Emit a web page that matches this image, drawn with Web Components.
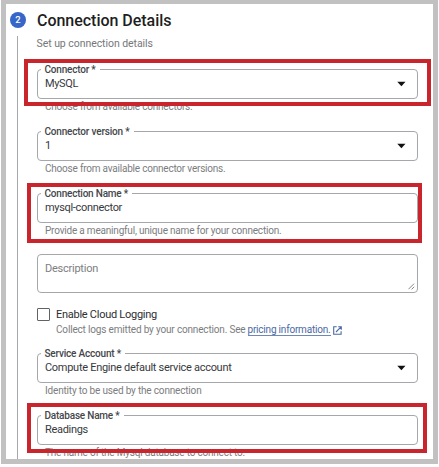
<!DOCTYPE html>
<html lang="en"><head><meta charset="utf-8"><title>Connection Details</title>
<style>
html,body{margin:0;background:#fff;width:439px;height:467px;overflow:hidden;font-family:Roboto,"Open Sans",sans-serif}
</style></head><body>
<connection-page></connection-page>
<script>
// Single line of text whose tracking is adjusted to span a given width.
class FitText extends HTMLElement{
  constructor(){super();this.attachShadow({mode:'open'}).innerHTML='<style>:host{display:inline-block;white-space:nowrap;vertical-align:top}span{display:inline-block}</style><span><slot></slot></span>';}
  connectedCallback(){
    const s=this.shadowRoot.querySelector('span'),w=+this.getAttribute('w');
    const n=this.textContent.length,r=s.getBoundingClientRect().width;
    if(w&&n)s.style.letterSpacing=((w-r)/n)+'px';
  }
}
// Red rectangle laid over a form field.
class RedMark extends HTMLElement{
  constructor(){super();this.attachShadow({mode:'open'}).innerHTML='<style>:host{position:absolute;z-index:3;box-sizing:border-box;border:4px solid #c9252d;pointer-events:none}</style>';}
}
class FormField extends HTMLElement{
  constructor(){super();this.attachShadow({mode:'open'}).innerHTML=`<style>
:host{display:block;flex:none;position:relative;box-sizing:border-box;width:381px;height:62px;font-size:11px;color:#37393d}
.box{box-sizing:border-box;height:30px;border:1.5px solid #a5a7aa;border-radius:4px;display:flex;align-items:center;justify-content:space-between;padding:0 10.5px 0 7.5px}
.label{position:absolute;left:4px;top:-6px;padding:0 4px;line-height:13px;background:#fff;font-size:10px;font-weight:500;color:#44464a}
.value{line-height:16px}
.help{line-height:14px;font-size:10px;color:#7b7d80;padding:1px 0 0 8.5px}
svg{display:none}:host([select]) svg{display:block}
</style><div class="box"><div class="value"><slot name="value"></slot></div><svg width="9" height="6" viewBox="0 0 9 6"><path d="M.3.8h8.2L4.4 5.2z" fill="#111"/></svg></div>
<div class="label"><slot name="label"></slot></div><div class="help"><slot name="help"></slot></div><slot></slot>`;}
}
class StepHeader extends HTMLElement{
  constructor(){super();this.attachShadow({mode:'open'}).innerHTML=`<style>
:host{display:flex;align-items:center;height:32px;padding-left:4px;gap:11px}
i{box-sizing:border-box;width:16px;height:16px;border-radius:50%;background:#3566c8;color:#fff;font:500 9.5px/16px Roboto,sans-serif;text-align:center}
h1{margin:1px 0 0;font-size:16px;font-weight:500;line-height:22px;color:#1e1f22}
</style><i>2</i><h1><slot></slot></h1>`;}
}
class DescriptionBox extends HTMLElement{
  constructor(){super();this.attachShadow({mode:'open'}).innerHTML=`<style>
:host{flex:none;box-sizing:border-box;width:381px;height:39px;border:1.5px solid #a5a7aa;border-radius:4px;display:flex;justify-content:space-between;align-items:flex-end;font-size:11px;color:#7c7e81;padding:0 2px 2px 7.5px}
div{align-self:flex-start;padding-top:6px;line-height:16px}
</style><div><slot></slot></div><svg width="7" height="7" viewBox="0 0 7 7"><path d="M.5 6.2 6 .7M3.6 6.4 6.2 3.8" stroke="#666" stroke-width=".8" fill="none"/></svg>`;}
}
class LoggingOption extends HTMLElement{
  constructor(){super();this.attachShadow({mode:'open'}).innerHTML=`<style>
:host{flex:none;display:flex;gap:6px;height:45px;font-size:11px;color:#2c2e31}
.check{box-sizing:border-box;width:13px;height:13px;margin:0 0 0 .5px;border:1.5px solid #606265;border-radius:1px}
.title{line-height:14px}
.line{font-size:10px;line-height:14px;color:#7b7d80;display:flex;margin-top:1px}
.link{color:#4b69a3;border-bottom:1px solid #6f87b6;height:12px;line-height:14px;margin-left:2px}
svg{margin:2.5px 0 0 2px}
</style><div class="check"></div><div><div class="title"><fit-text w="101">Enable Cloud Logging</fit-text></div>
<div class="line"><fit-text w="189.5">Collect logs emitted by your connection. See</fit-text><span class="link"><fit-text w="83">pricing information.</fit-text></span>
<svg width="9" height="9" viewBox="0 0 9 9"><path d="M3.7.8H.7v7.4h7.4V5.2M5.2.7h3.1v3.1M8.1.9 3 6" stroke="#4b69a3" stroke-width="1.1" fill="none"/></svg></div></div>`;}
}
class ConnectionPage extends HTMLElement{
  constructor(){super();this.attachShadow({mode:'open'}).innerHTML=`<style>
:host{display:block;box-sizing:border-box;width:437px;height:464px;margin-left:1px;border:solid #c1c1c1;border-width:4px 5px 5px;background:#fff;overflow:hidden}
.body{display:flex;margin-left:11px;height:423px}
.rail{box-sizing:border-box;width:1px;background:#a6a8ab;flex:none}
.form{display:flex;flex-direction:column;margin-left:18.5px;width:382px;flex:none}
.sub{flex:none;font-size:10.5px;color:#757779;line-height:14px;height:32px;padding-top:1px}
</style>
<step-header><fit-text w="134.5">Connection Details</fit-text></step-header>
<div class="body"><div class="rail"></div><div class="form">
<div class="sub"><fit-text w="116.5">Set up connection details</fit-text></div>
<form-field select><fit-text slot="label" w="51">Connector *</fit-text><fit-text slot="value" w="33">MySQL</fit-text><fit-text slot="help" w="147.5">Choose from available connectors.</fit-text><red-mark style="left:-12.5px;top:-10px;width:407px;height:47px"></red-mark></form-field>
<form-field select><fit-text slot="label" w="85">Connector version *</fit-text><fit-text slot="value" w="6">1</fit-text><fit-text slot="help" w="180.5">Choose from available connector versions.</fit-text></form-field>
<form-field><fit-text slot="label" w="83.5">Connection Name *</fit-text><fit-text slot="value" w="77">mysql-connector</fit-text><fit-text slot="help" w="236.5">Provide a meaningful, unique name for your connection.</fit-text><red-mark style="left:-9.5px;top:-10px;width:395px;height:60px"></red-mark></form-field>
<description-box style="margin-top:-1px"><fit-text w="53">Description</fit-text></description-box>
<logging-option style="margin-top:15px"></logging-option>
<form-field select><fit-text slot="label" w="76.5">Service Account *</fit-text><fit-text slot="value" w="186.5">Compute Engine default service account</fit-text><fit-text slot="help" w="156.5">Identity to be used by the connection</fit-text></form-field>
<form-field><fit-text slot="label" w="75">Database Name *</fit-text><fit-text slot="value" w="43">Readings</fit-text><fit-text slot="help" w="200">The name of the Mysql database to connect to.</fit-text><red-mark style="left:-9.5px;top:-12px;width:400px;height:50px"></red-mark></form-field>
</div></div>`;}
}
customElements.define('fit-text',FitText);
customElements.define('red-mark',RedMark);
customElements.define('form-field',FormField);
customElements.define('step-header',StepHeader);
customElements.define('description-box',DescriptionBox);
customElements.define('logging-option',LoggingOption);
customElements.define('connection-page',ConnectionPage);
</script></body></html>
